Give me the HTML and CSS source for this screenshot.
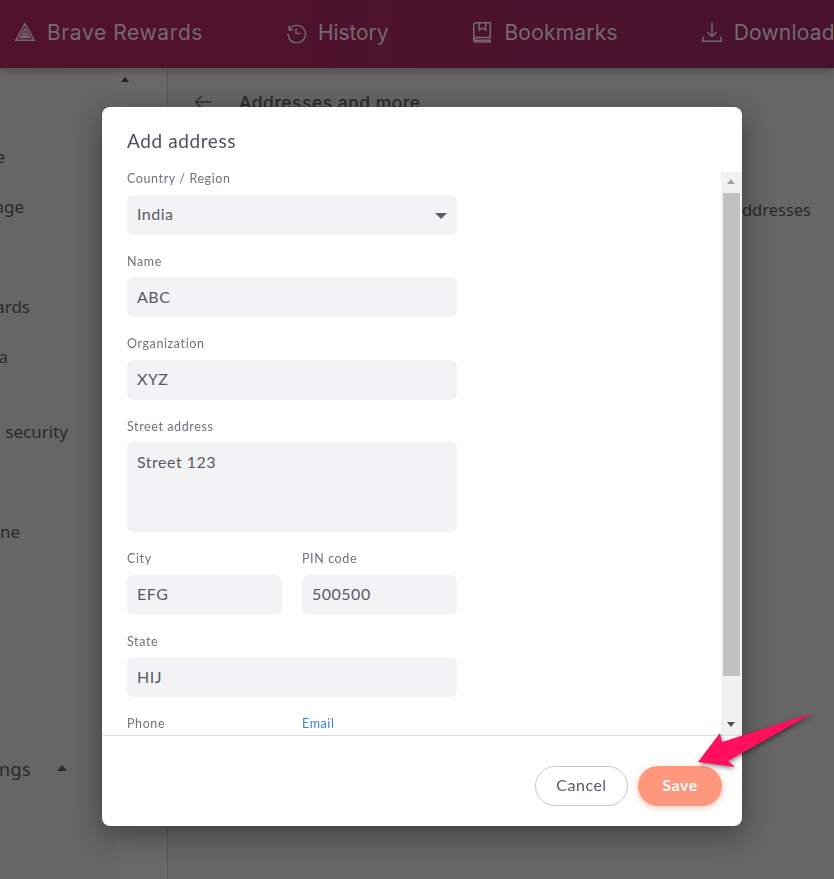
FILE: index.html
```html
<!DOCTYPE html>
<html lang="en">
<head>
  <meta charset="UTF-8" />
  <meta name="viewport" content="width=device-width, initial-scale=1.0" />
  <title>Add address</title>
  <link rel="stylesheet" href="styles.css">
</head>
<body>
  <header class="topbar">
    <a class="top-link link-rewards">
      <svg class="top-icon" viewBox="0 0 24 24"><path d="M12 3 2 21h20zM12 8.500 6.500 18h11zM12 13l-2.300 4h4.600z"/></svg>
      Brave Rewards
    </a>
    <a class="top-link link-history">
      <svg class="top-icon" viewBox="0 0 24 24"><path d="M4.500 5v4.500H9M5 9a9.500 9.500 0 1 1-1.600 5M12 8v5.500h5"/></svg>
      History
    </a>
    <a class="top-link link-bookmarks">
      <svg class="top-icon" viewBox="0 0 24 24"><path d="M21 18V2H5a2 2 0 0 0-2 2v16.500A2.500 2.500 0 0 0 5.500 23H21v-2H5.500a1.500 1.500 0 0 1 0-3zM9 2v8l3.500-2.500L16 10V2"/></svg>
      Bookmarks
    </a>
    <a class="top-link link-downloads">
      <svg class="top-icon" viewBox="0 0 24 24"><path d="M12 2v15M7 12l5 5 5-5M2 17v5h20v-5"/></svg>
      Downloads
    </a>
  </header>

  <div class="page">
    <nav class="sidebar">
      <div class="side-item item-1"><span>Appearance</span></div>
      <div class="side-item item-2"><span>New Tab Page</span></div>
      <div class="side-item item-3"><span>Rewards</span></div>
      <div class="side-item item-4"><span>Data</span></div>
      <div class="side-item item-5"><span>Privacy and security</span></div>
      <div class="side-item item-6"><span>Engine</span></div>
      <div class="side-item item-7"><span>Additional settings</span></div>
      <i class="side-caret"></i>
    </nav>
    <div class="side-scroll"><i class="side-scroll-up"></i></div>
    <main class="content">
      <div class="content-head">
        <span class="back-arrow">
          <svg viewBox="0 0 24 24"><path d="M21 12H4M10.500 5.500 4 12l6.500 6.500"/></svg>
        </span>
        <h2>Addresses and more</h2>
      </div>
      <div class="content-row">Addresses</div>
    </main>
  </div>

  <section class="dialog">
    <h1 class="dialog-title">Add address</h1>
    <div class="dialog-body">
      <div class="form">
        <div class="field">
          <label>Country / Region</label>
          <div class="input select">India<i class="select-caret"></i></div>
        </div>
        <div class="field">
          <label>Name</label>
          <div class="input">ABC</div>
        </div>
        <div class="field">
          <label>Organization</label>
          <div class="input">XYZ</div>
        </div>
        <div class="field">
          <label>Street address</label>
          <div class="input textarea">Street 123</div>
        </div>
        <div class="field-row">
          <div class="field">
            <label>City</label>
            <div class="input">EFG</div>
          </div>
          <div class="field">
            <label>PIN code</label>
            <div class="input">500500</div>
          </div>
        </div>
        <div class="field">
          <label>State</label>
          <div class="input">HIJ</div>
        </div>
        <div class="field-row">
          <div class="field">
            <label>Phone</label>
            <div class="input"></div>
          </div>
          <div class="field">
            <label class="label-focus">Email</label>
            <div class="input"></div>
          </div>
        </div>
      </div>
      <div class="scrollbar">
        <i class="scroll-btn scroll-up"></i>
        <div class="scroll-track"><div class="scroll-thumb"></div></div>
        <i class="scroll-btn scroll-down"></i>
      </div>
    </div>
    <footer class="dialog-foot">
      <button class="btn btn-cancel">Cancel</button>
      <button class="btn btn-save">Save</button>
    </footer>
  </section>

  <!-- red annotation arrow -->
  <svg class="arrow" viewBox="0 0 834 879"><polygon points="698,762 720,733 722,742 813,713 728,761 735,767"/></svg>
</body>
</html>
```

FILE: styles.css
```css
:root {
  --text: #5a5a66;
  --label: #6f737c;
  --field: #f1f3f5;
  --shade: #666666;
}

* {
  box-sizing: border-box;
}

html, body {
  height: 100%;
}

body {
  margin: 0;
  overflow: hidden;
  font-family: Lato, "Noto Sans", sans-serif;
  background: var(--shade);
  color: var(--text);
}

/* top bar */
.topbar {
  height: 68px;
  padding-bottom: 4px;
  display: flex;
  align-items: center;
  overflow: hidden;
  white-space: nowrap;
  background: linear-gradient(90deg, #52132a, #48122f);
  box-shadow: 0 2px 8px rgba(0, 0, 0, 0.3);
  position: relative;
}

.top-link {
  display: flex;
  align-items: center;
  flex: none;
  gap: 11px;
  font-family: Inter, sans-serif;
  font-size: 21px;
  letter-spacing: 0.2px;
  color: #756a6f;
}

.link-rewards { margin-left: 14px; letter-spacing: 0.6px; }
.link-history { margin-left: 82px; letter-spacing: -0.1px; }
.link-bookmarks { margin-left: 83px; }
.link-downloads { margin-left: 83px; }

.top-icon {
  width: 22px;
  height: 22px;
  fill: none;
  stroke: #756a6f;
  stroke-width: 1.6;
}

/* page behind the dialog */
.page {
  display: flex;
  height: calc(100% - 68px);
}

.sidebar {
  width: 115px;
  padding-top: 76px;
  overflow: hidden;
  font-family: "Noto Sans", sans-serif;
  font-size: 17px;
  color: #2c2a2a;
}

.side-item {
  height: 24px;
  display: flex;
  justify-content: flex-end;
  align-items: center;
  white-space: nowrap;
}

.side-item span { flex: none; }

.item-1 { margin-right: 110px; }
.item-2 { margin-top: 26px; margin-right: 91px; }
.item-3 { margin-top: 76px; margin-right: 85px; }
.item-4 { margin-top: 26px; margin-right: 107px; }
.item-5 { margin-top: 51px; margin-right: 47px; word-spacing: 3px; }
.item-6 { margin-top: 76px; margin-right: 95px; }
.item-7 { margin-top: 214px; margin-right: 84px; font-size: 18px; letter-spacing: 0.4px; }

.side-caret {
  position: absolute;
  left: 57px;
  top: 765px;
  border: 5.500px solid transparent;
  border-top: 0;
  border-bottom: 6px solid #2c2a2a;
}

.side-scroll {
  width: 53px;
  background: #696969;
  border-right: 1px solid #5a5a5a;
  padding: 9px 0 0 6px;
}

.side-scroll-up {
  display: block;
  width: 0;
  border: 4.500px solid transparent;
  border-top: 0;
  border-bottom: 5px solid #222;
}

.content {
  flex: 1;
  position: relative;
  overflow: hidden;
  font-family: Inter, sans-serif;
  color: #2c2a2a;
}

.content-head {
  display: flex;
  align-items: center;
  gap: 25px;
  padding: 23px 0 0 24px;
}

.content-head h2 {
  margin: 0;
  font-size: 17.500px;
  font-weight: 500;
  letter-spacing: 0.5px;
}

.back-arrow svg {
  display: block;
  width: 22px;
  height: 22px;
  fill: none;
  stroke: #333;
  stroke-width: 1.6;
}

.content-row {
  margin: 85px 23px 0 0;
  text-align: right;
  font-family: "Noto Sans", sans-serif;
  font-size: 16.500px;
}

/* dialog */
.dialog {
  position: fixed;
  left: 102px;
  top: 107px;
  width: 640px;
  height: 719px;
  display: flex;
  flex-direction: column;
  background: #fff;
  border-radius: 8px;
  box-shadow: 0 8px 30px rgba(0, 0, 0, 0.4);
}

.dialog-title {
  margin: 0;
  height: 65px;
  padding: 22px 25px 0;
  font-size: 19px;
  line-height: 24px;
  font-weight: 400;
  letter-spacing: 0.6px;
  color: #50505c;
}

.dialog-body {
  height: 564px;
  display: flex;
  overflow: hidden;
  border-bottom: 1px solid #dedfe3;
}

.form {
  width: 619px;
  padding-left: 25px;
}

.field {
  width: 330px;
  margin-bottom: 20px;
}

.field label {
  display: block;
  height: 22.500px;
  line-height: 14px;
  font-size: 12.500px;
  letter-spacing: 0.6px;
  color: var(--label);
}

.field .label-focus {
  color: #3b7fdc;
}

.field-row {
  width: 330px;
  display: flex;
  gap: 20px;
}

.field-row .field {
  flex: 1;
}

.input {
  height: 40px;
  padding: 0 10px 2px;
  display: flex;
  align-items: center;
  position: relative;
  font-size: 16px;
  letter-spacing: 0.5px;
  color: var(--text);
  background: var(--field);
  border-radius: 6px;
}

.textarea {
  height: 90px;
  padding-top: 10px;
  align-items: flex-start;
}

.select-caret {
  position: absolute;
  right: 10px;
  top: 18px;
  border: 6.500px solid transparent;
  border-bottom: 0;
  border-top: 6px solid #5b5e66;
}

/* dialog scrollbar */
.scrollbar {
  width: 21px;
  display: flex;
  flex-direction: column;
  background: #f1f1f1;
}

.scroll-btn {
  height: 21px;
  flex: none;
  position: relative;
}

.scroll-btn::after {
  content: "";
  position: absolute;
  left: 6px;
  border: 4.500px solid transparent;
}

.scroll-up::after {
  top: 7px;
  border-top: 0;
  border-bottom: 5px solid #a3a3a3;
}

.scroll-down::after {
  top: 8px;
  border-bottom: 0;
  border-top: 5px solid #505050;
}

.scroll-track {
  flex: 1;
  padding: 0 2px;
}

.scroll-thumb {
  height: 483px;
  background: #c1c1c1;
}

.dialog-foot {
  flex: 1;
  display: flex;
  justify-content: flex-end;
  gap: 10px;
  padding: 30px 20px 0 0;
}

.btn {
  height: 40px;
  padding: 0 0 3px;
  border-radius: 20px;
  font-family: inherit;
  font-size: 16px;
  letter-spacing: 0.5px;
}

.btn-cancel {
  width: 93px;
  background: #fff;
  color: #5a5a66;
  border: 1px solid #c8c8d2;
}

.btn-save {
  width: 84px;
  background: #ff977d;
  color: #fff;
  border: 0;
  font-weight: 700;
  box-shadow: 0 2px 6px rgba(255, 151, 125, 0.5);
}

.arrow {
  position: fixed;
  left: 0;
  top: 0;
  width: 834px;
  height: 879px;
  pointer-events: none;
  fill: #ff0f5c;
  filter: drop-shadow(1px 2px 2px rgba(0, 0, 0, 0.45));
}
```
